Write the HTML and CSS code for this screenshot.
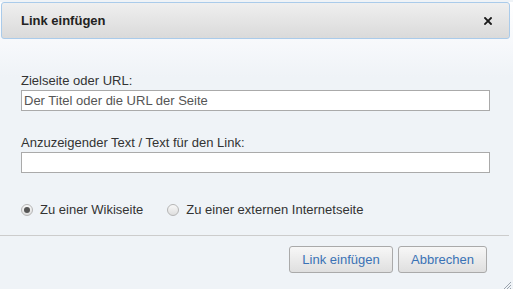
FILE: index.html
```html
<!DOCTYPE html>
<html lang="de">
<head>
    <meta charset="UTF-8">
    <title>Link einfügen</title>
    <link rel="stylesheet" href="styles.css">
</head>
<body>
    <div class="dialog">
        <div class="titlebar">
            <span class="title">Link einfügen</span>
            <span class="close">
                <svg width="8" height="8" viewBox="0 0 8 8">
                    <path d="M1 1 L7 7 M7 1 L1 7" stroke="#1a1a1a" stroke-width="1.8" stroke-linecap="square"/>
                </svg>
            </span>
        </div>

        <div class="content">
            <label class="field-label">Zielseite oder URL:</label>
            <input class="text-input" type="text" placeholder="Der Titel oder die URL der Seite">

            <label class="field-label second">Anzuzeigender Text / Text für den Link:</label>
            <input class="text-input" type="text">

            <div class="radio-row">
                <span class="radio-option">
                    <span class="radio checked"></span>
                    Zu einer Wikiseite
                </span>
                <span class="radio-option">
                    <span class="radio"></span>
                    Zu einer externen Internetseite
                </span>
            </div>
        </div>

        <div class="buttonpane">
            <button class="btn btn-insert">Link einfügen</button>
            <button class="btn btn-cancel">Abbrechen</button>
        </div>

        <svg class="resize-handle" width="12" height="12" viewBox="0 0 12 12">
            <path d="M11 3 L3 11 M11 6 L6 11 M11 9 L9 11" stroke="#9aa3ad" stroke-width="1"/>
        </svg>
    </div>
</body>
</html>
```

FILE: styles.css
```css
:root {
    --text: #333333;
    --border: #aaaaaa;
    --link-blue: #3a72b5;
}

* {
    margin: 0;
    padding: 0;
    box-sizing: border-box;
}

body {
    font-family: 'Liberation Sans', Arial, sans-serif;
    font-size: 13px;
    color: var(--text);
    background: #eff3f7;
    width: 513px;
    height: 289px;
    overflow: hidden;
}

.dialog {
    position: relative;
    height: 289px;
    background: linear-gradient(to bottom, #ffffff 0px, #f6f8fb 45px, #eff3f7 75px, #eff3f7 100%);
}

.titlebar {
    display: flex;
    align-items: center;
    justify-content: space-between;
    height: 37px;
    margin: 2px 3px 0 1px;
    padding: 0 17px 0 19px;
    border: 1px solid #aacbea;
    border-radius: 3px;
    background: linear-gradient(to bottom, #efefef, #dadada);
}

.title {
    font-weight: bold;
    font-size: 13px;
    color: #222;
}

.close {
    display: flex;
}

.content {
    display: flex;
    flex-direction: column;
    padding: 34px 23px 0 21px;
}

.field-label {
    line-height: 15px;
    margin-bottom: 2px;
}

.field-label.second {
    margin-top: 24px;
}

.text-input {
    height: 21px;
    border: 1px solid var(--border);
    background: #fff;
    font-family: inherit;
    font-size: 13px;
    padding: 0 2px;
    color: var(--text);
    outline: none;
}

.text-input::placeholder {
    color: #555;
}

.radio-row {
    display: flex;
    gap: 24px;
    margin-top: 29px;
    line-height: 15px;
}

.radio-option {
    display: flex;
    align-items: center;
    gap: 7px;
}

.radio {
    display: inline-flex;
    align-items: center;
    justify-content: center;
    width: 12px;
    height: 12px;
    border-radius: 50%;
    border: 1px solid #b5b5b5;
    background: linear-gradient(to bottom, #f8f8f8, #dedede);
}

.radio.checked::after {
    content: "";
    width: 6px;
    height: 6px;
    border-radius: 50%;
    background: #555;
}

.buttonpane {
    display: flex;
    justify-content: flex-end;
    gap: 5px;
    margin: 18px 4px 0 0;
    padding: 10px 22px 0 0;
    border-top: 1px solid #cccccc;
}

.btn {
    height: 27px;
    padding: 0;
    font-family: inherit;
    font-size: 13px;
    color: var(--link-blue);
    border: 1px solid var(--border);
    border-radius: 3px;
    background: linear-gradient(to bottom, #f7f7f7, #dfdfdf);
    cursor: pointer;
}

.btn-insert {
    width: 104px;
}

.btn-cancel {
    width: 89px;
}

.resize-handle {
    position: absolute;
    right: 1px;
    bottom: 0;
}
```
